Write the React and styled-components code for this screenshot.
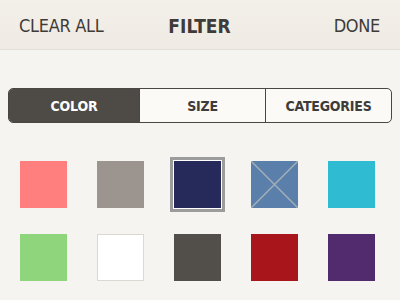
import React, { useState } from "react";
import styled, { createGlobalStyle } from "styled-components";

const GlobalStyle = createGlobalStyle`
  body {
    margin: 0;
    background: #f6f4f0;
    font-family: "DejaVu Sans Condensed", "Liberation Sans Narrow", "Liberation Sans", sans-serif;
  }
`;

const colors = [
  "#fe7f7d",
  "#9c948f",
  "#262a5a",
  "#5a7fab",
  "#2fbcd2",
  "#8fd57b",
  "#ffffff",
  "#524e4a",
  "#a8161b",
  "#522a6e",
];

const tabs = ["COLOR", "SIZE", "CATEGORIES"];

const App = () => {
  const [tab, setTab] = useState(0);
  const [selected, setSelected] = useState(2);

  return (
    <Page>
      <GlobalStyle />
      <Header>
        <HeaderLink>CLEAR ALL</HeaderLink>
        <Title>FILTER</Title>
        <HeaderLink right>DONE</HeaderLink>
      </Header>
      <Tabs>
        {tabs.map((t, i) => (
          <Tab key={t} active={i === tab} onClick={() => setTab(i)}>
            {t}
          </Tab>
        ))}
      </Tabs>
      <Grid>
        {colors.map((c, i) => (
          <Swatch
            key={c}
            color={c}
            selected={i === selected}
            light={c === "#ffffff"}
            onClick={() => setSelected(i)}
          >
            {i === 3 && (
              <svg width="47" height="47" viewBox="0 0 47 47">
                <path d="M0 0L47 47M47 0L0 47" stroke="#a3adb8" strokeWidth="1.5" />
              </svg>
            )}
          </Swatch>
        ))}
      </Grid>
    </Page>
  );
};

const Page = styled.div`
  width: 400px;
  height: 300px;
  overflow: hidden;
`;

const Header = styled.div`
  height: 50px;
  display: grid;
  grid-template-columns: 1fr auto 1fr;
  align-items: center;
  padding: 0 20px 0 19px;
  box-sizing: border-box;
  background: linear-gradient(#f3efe9, #efebe4);
  border-bottom: 1px solid #e4e0d9;
  color: #3e3b38;
`;

const HeaderLink = styled.span`
  font-size: 18px;
  letter-spacing: -0.3px;
  padding-top: 2px;
  text-align: ${({ right }) => (right ? "right" : "left")};
`;

const Title = styled.span`
  font-size: 19px;
  font-weight: 700;
  padding-top: 2px;
`;

const Tabs = styled.div`
  display: grid;
  grid-template-columns: 130px 126px 1fr;
  margin: 38px 8px 0 8px;
  height: 35px;
  box-sizing: border-box;
  border: 1.5px solid #4a4642;
  border-radius: 5px;
  overflow: hidden;
  background: #fbfaf7;
`;

const Tab = styled.div`
  display: flex;
  align-items: center;
  justify-content: center;
  font-size: 14px;
  font-weight: 700;
  letter-spacing: -0.2px;
  cursor: pointer;
  color: ${({ active }) => (active ? "#ffffff" : "#3e3b38")};
  background: ${({ active }) => (active ? "#4e4a45" : "transparent")};
  & + & {
    border-left: 1.5px solid #4a4642;
  }
`;

const Grid = styled.div`
  display: grid;
  grid-template-columns: repeat(5, 47px);
  column-gap: 30px;
  row-gap: 26px;
  padding: 38px 0 0 20px;
`;

const Swatch = styled.div`
  width: 47px;
  height: 47px;
  box-sizing: border-box;
  background: ${({ color }) => color};
  border: ${({ light }) => (light ? "1px solid #dcd8d2" : "none")};
  cursor: pointer;
  outline: ${({ selected }) => (selected ? "3px solid #9c9c9c" : "none")};
  outline-offset: ${({ selected }) => (selected ? "1px" : "0")};
  box-shadow: ${({ selected }) => (selected ? "0 0 0 1px #ffffff" : "none")};

  svg {
    display: block;
  }
`;

export default App;
